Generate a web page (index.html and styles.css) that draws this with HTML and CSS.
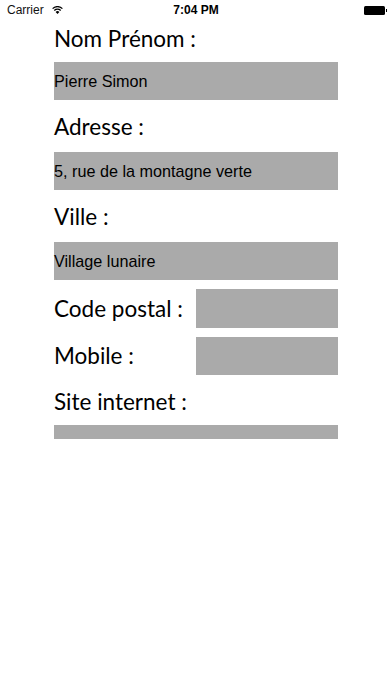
FILE: index.html
```html
<!DOCTYPE html>
<html lang="fr">
<head>
<meta charset="utf-8">
<title>Formulaire</title>
<link rel="stylesheet" href="styles.css">
</head>
<body>
<div class="status">
  <div class="status-left">
    <span class="carrier">Carrier</span>
    <svg class="wifi" width="11" height="8" viewBox="0 0 11 8">
      <path d="M5.5 8 L3.6 5.9 A2.8 2.8 0 0 1 7.4 5.9 Z" fill="#000"/>
      <path d="M2.3 4.5 A4.6 4.6 0 0 1 8.7 4.5" fill="none" stroke="#000" stroke-width="1.3"/>
      <path d="M0.6 2.6 A7 7 0 0 1 10.4 2.6" fill="none" stroke="#000" stroke-width="1.3"/>
    </svg>
  </div>
  <div class="time">7:04 PM</div>
  <div class="status-right">
    <span class="battery"><span class="nub"></span></span>
  </div>
</div>
<form class="form">
  <div class="label first">Nom Prénom :</div>
  <div class="field">Pierre Simon</div>
  <div class="label">Adresse :</div>
  <div class="field">5, rue de la montagne verte</div>
  <div class="label">Ville :</div>
  <div class="field">Village lunaire</div>
  <div class="row">
    <div class="label inline">Code postal :</div>
    <div class="field small"></div>
  </div>
  <div class="row">
    <div class="label inline">Mobile :</div>
    <div class="field small"></div>
  </div>
  <div class="label">Site internet :</div>
  <div class="field thin"></div>
</form>
</body>
</html>
```
FILE: styles.css
```css
html, body {
  margin: 0;
  padding: 0;
  background: #fff;
}
body {
  width: 392px;
  height: 696px;
  font-family: "Liberation Sans", Arial, sans-serif;
  color: #000;
}
.status {
  height: 20px;
  display: flex;
  align-items: center;
  justify-content: space-between;
  padding: 0 5px 0 7px;
  font-size: 12px;
  position: relative;
}
.status-left {
  display: flex;
  align-items: center;
  gap: 8px;
}
.carrier {
  font-family: "Liberation Sans", Arial, sans-serif;
  color: #111;
}
.wifi {
  display: block;
  margin-top: -1px;
}
.time {
  position: absolute;
  left: 0;
  right: 0;
  text-align: center;
  font-weight: bold;
  font-size: 12px;
  pointer-events: none;
}
.status-right {
  display: flex;
  align-items: center;
}
.battery {
  position: relative;
  display: block;
  width: 21px;
  height: 9px;
  background: #000;
  border-radius: 1.5px;
  margin-right: 2px;
}
.nub {
  position: absolute;
  right: -2px;
  top: 3px;
  width: 1.5px;
  height: 3px;
  background: #000;
}
.form {
  margin: 0;
  padding: 0 0 0 54px;
  width: 284px;
  display: flex;
  flex-direction: column;
}
.label {
  font-family: Lato, "Open Sans", sans-serif;
  font-size: 22.5px;
  line-height: 30px;
  height: 30px;
  margin-top: 12px;
  margin-bottom: 10px;
  white-space: nowrap;
}
.label.first {
  margin-top: 4px;
  margin-bottom: 8px;
}
.field {
  height: 38px;
  background: #aaaaaa;
  font-size: 16.2px;
  line-height: 38px;
  color: #000;
  white-space: nowrap;
}
.row {
  display: flex;
  align-items: center;
  justify-content: space-between;
  margin-top: 9px;
}
.label.inline {
  margin: 0;
}
.field.small {
  width: 142px;
  height: 39px;
}
.row + .row .field.small {
  height: 38px;
}
.field.thin {
  height: 14px;
  margin-top: -2px;
}
```
